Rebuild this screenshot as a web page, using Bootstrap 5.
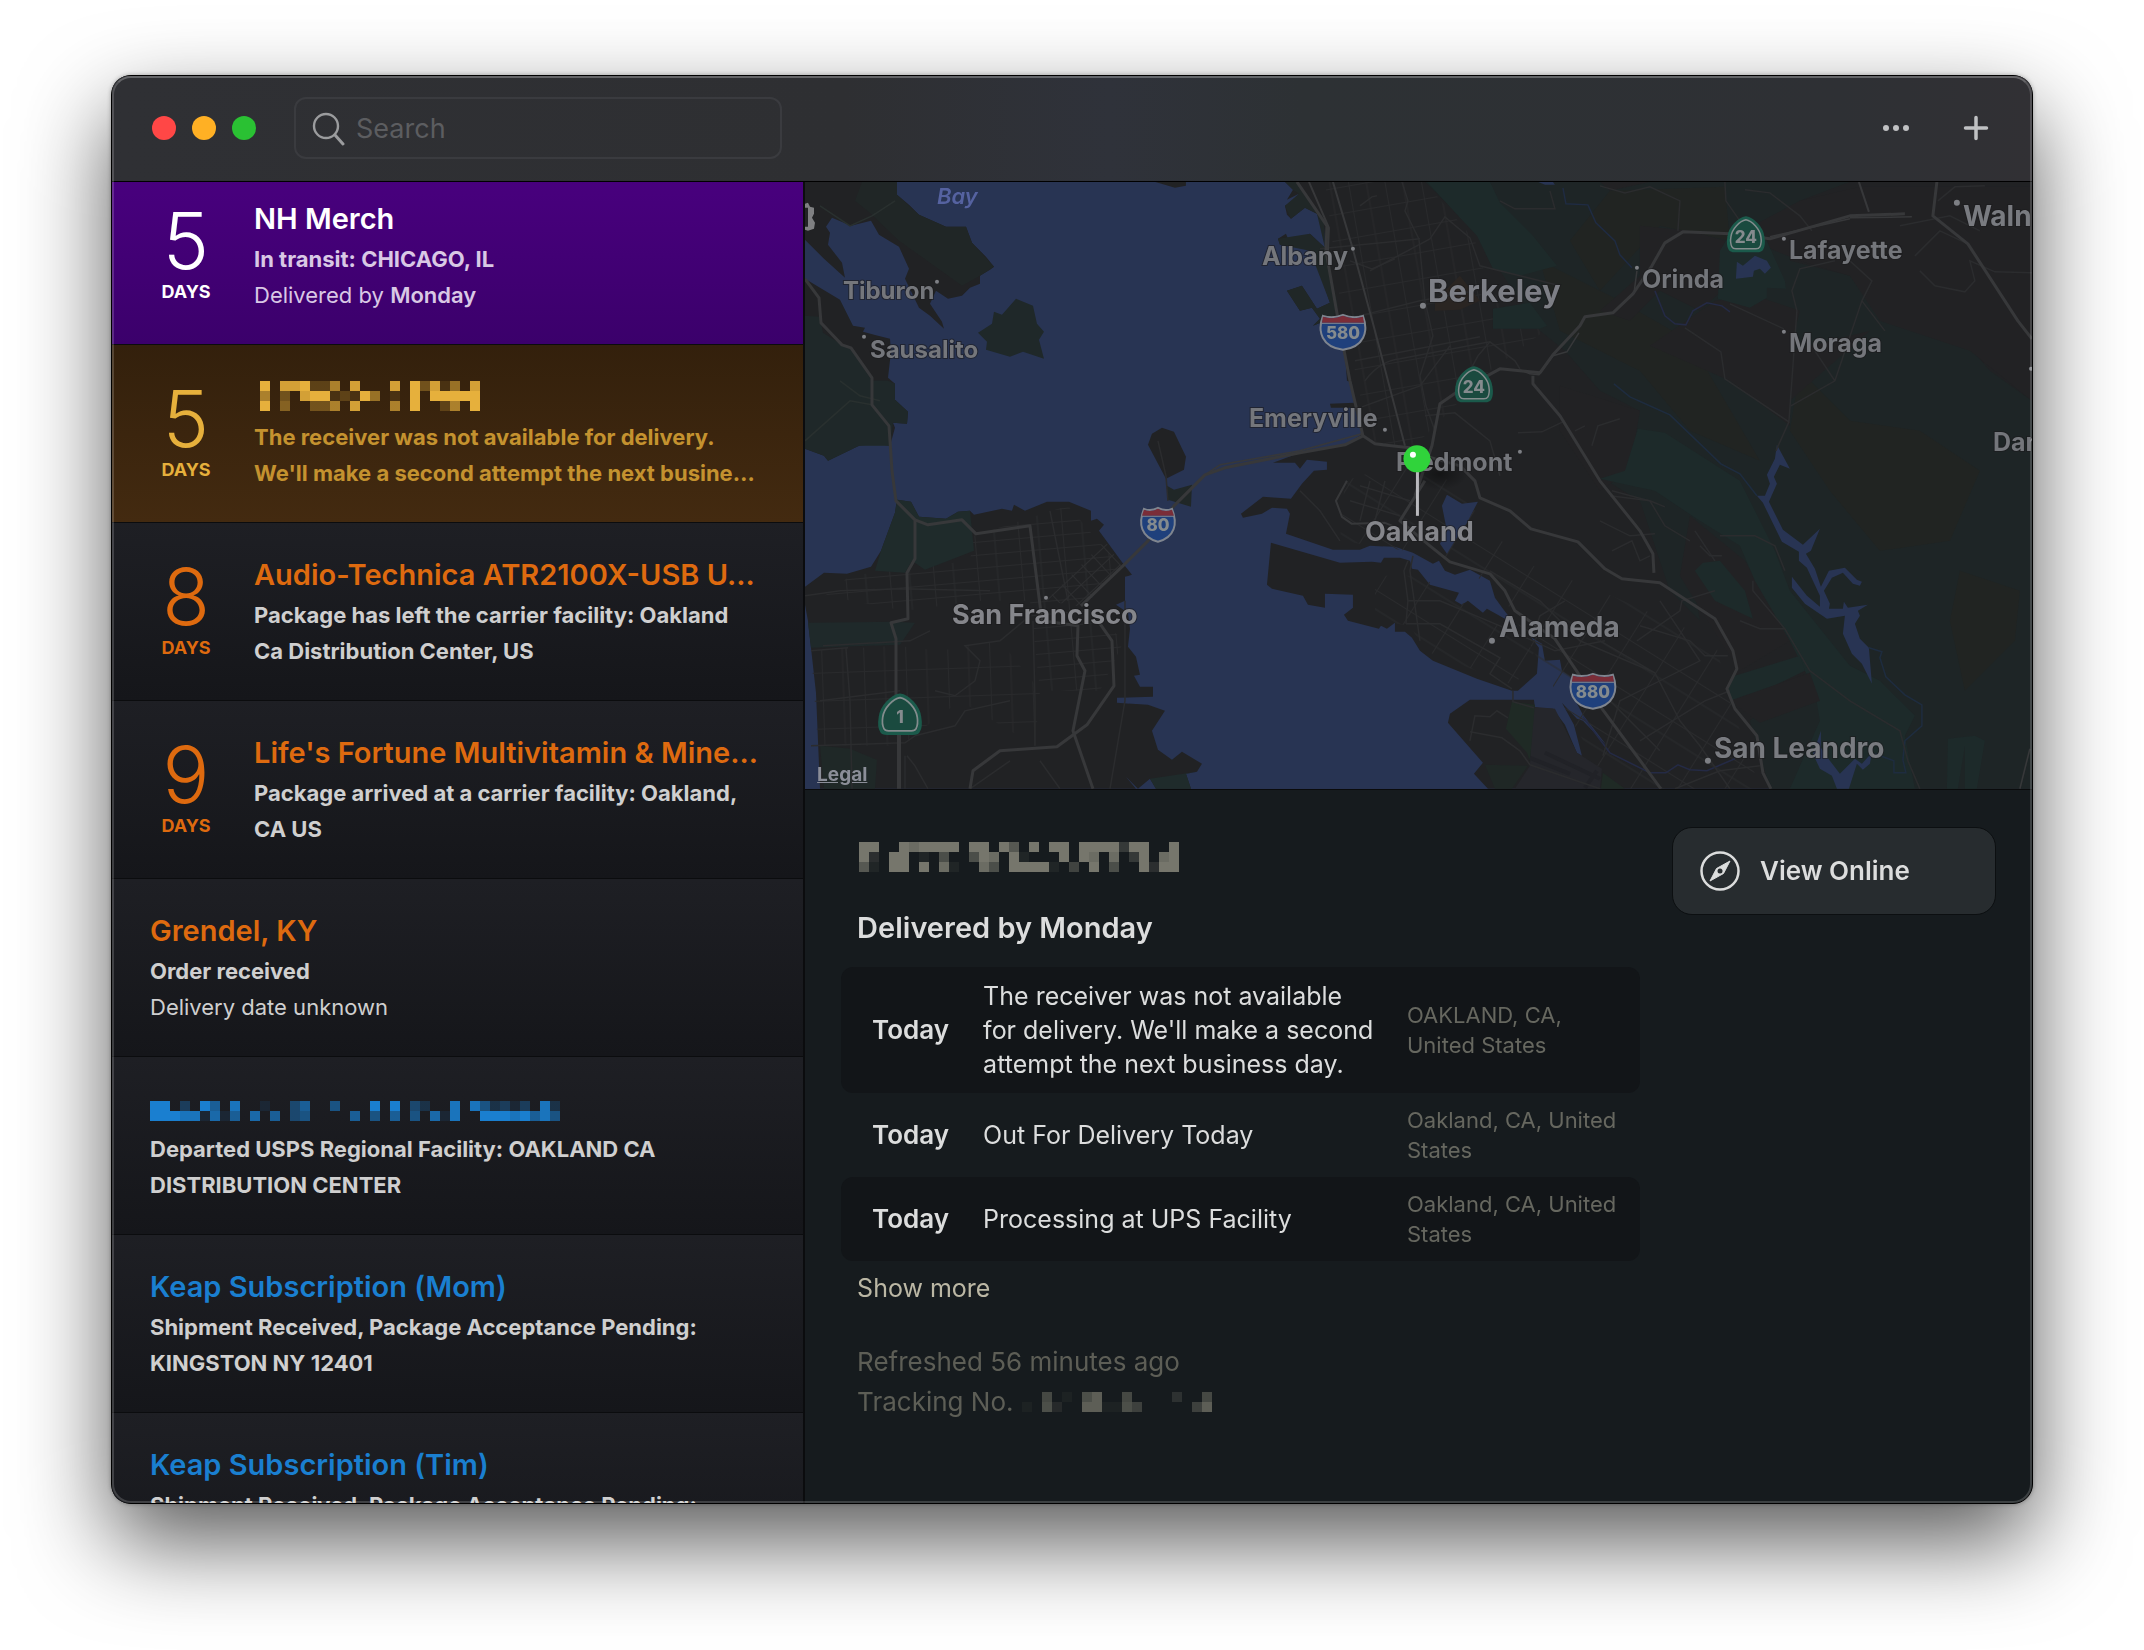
<!DOCTYPE html>
<html lang="en" data-bs-theme="dark">
<head>
<meta charset="utf-8">
<meta name="viewport" content="width=device-width, initial-scale=1">
<title>Deliveries</title>
<link href="https://cdn.jsdelivr.net/npm/bootstrap@5.3.0/dist/css/bootstrap.min.css" rel="stylesheet">
<style>
  body { background: #fff; font-family: Inter, "Liberation Sans", sans-serif; font-size: 26px; color: #dcdddd; }
  .desktop { padding: 75px 111px 146px; height: 100vh; min-height: 900px; }
  .app-window { position: relative; border: 1px solid #000; border-radius: 20px; background: #161b1e;
    box-shadow: 0 38px 90px rgba(0,0,0,.65), 0 0 4px rgba(0,0,0,.3); }
  .app-window::after { content: ""; position: absolute; inset: 0; border-radius: 19px; pointer-events: none;
    border: 2px solid rgba(255,255,255,.17); border-top-color: rgba(255,255,255,.26); }

  .titlebar { height: 106px; padding: 0 32px 2px 40px; border-bottom: 1px solid #000;
    background: linear-gradient(90deg, #2f3034 0%, #2e2f32 38%, #2f323a 52%, #2d3134 62%, #2e3034 90%, #313034 100%); }
  .light { width: 24px; height: 24px; border-radius: 50%; border: 0; padding: 0; }
  .light-close { background: #ff4746; }
  .light-min { background: #ffb024; }
  .light-max { background: #2ac133; }
  .search-box { width: 488px; height: 62px; margin-left: 38px; border: 2px solid #3a3b3f; border-radius: 12px; padding: 0 16px; }
  .search-box input { min-width: 0; background: none; border: 0; outline: 0; padding: 4px 0 0; font-size: 27px; color: #dcdddd; }
  .search-box input::placeholder { color: #5c5d60; opacity: 1; }
  .tool-btn { width: 48px; height: 48px; padding: 0; border: 0; background: none; color: #c0c1c3; }

  .sidebar { flex: 0 0 36.1%; border-right: 2px solid #0b0c0e; background: #18191c; overflow-y: auto; scrollbar-width: none; }
  .sidebar::-webkit-scrollbar { display: none; }
  .parcel { min-height: 178px; padding: 30px 36px 0 38px; border-top: 1px solid #0b0c0e; gap: 32px; flex-shrink: 0;
    background: linear-gradient(#1e1f24, #15161a); color: #cfcfcf; font-size: 22px; line-height: 36px; font-weight: 700; text-decoration: none; }
  .parcel-name { font-size: 29px; line-height: 44px; font-weight: 600; margin: 0; }
  .parcel-text { display: -webkit-box; -webkit-line-clamp: 2; -webkit-box-orient: vertical; overflow: hidden; margin: 0 4px 0 0; }
  .count { width: 72px; padding-top: 5px; text-align: center; flex-shrink: 0; }
  .count-num { font-size: 78px; line-height: 78px; font-weight: 300; display: block; }
  .count-unit { font-size: 18px; line-height: 24px; font-weight: 700; display: block; }
  .is-orange .parcel-name, .is-orange .count { color: #de6a0f; }
  .is-blue .parcel-name { color: #1a7fd0; }
  .is-purple { background: linear-gradient(#49007f, #3b006b); color: #d9c8e5; }
  .is-purple .parcel-name, .is-purple .count { color: #fff; }
  .is-amber { background: linear-gradient(#33200c, #432a10); color: #c4922f; }
  .is-amber .parcel-name, .is-amber .count { color: #e6b03c; }
  .mosaic { display: block; }
  .name-mosaic { height: 44px; padding: 6px 0 8px 6px; }
  .is-blue .name-mosaic { padding: 4px 0 10px 0; }

  .map-pane { height: 46%; border-bottom: 1px solid #0a0b0c; background: #283453; }
  .map-art { width: 100%; height: 100%; display: block; }
  .map-art text { font-family: Inter, "Liberation Sans", sans-serif; font-weight: 700; font-size: 24px; fill: #74767b;
    paint-order: stroke; stroke: #1a1b1d; stroke-width: 2px; stroke-opacity: .6; }
  .map-art .suburb { font-size: 25px; }
  .map-art .city { font-size: 27px; fill: #85868b; }
  .map-art .town { font-size: 28px; fill: #797b80; }
  .map-art .major { font-size: 31px; fill: #7d7f86; }
  .map-art .bay { font-size: 22px; font-weight: 600; fill: #5562a0; stroke: none; }
  .map-art .sign { font-size: 17px; font-weight: 800; fill: #858b8e; text-anchor: middle; stroke: none; }
  .legal { position: absolute; left: 12px; bottom: 2px; font-size: 19px; line-height: 24px; font-weight: 700; color: #8b8e98; }

  .detail { padding: 37px 36px 0; gap: 32px; }
  .detail-head { padding: 15px 16px 0 18px; }
  .detail-head h2 { font-size: 29px; line-height: 44px; font-weight: 600; margin: 34px 0 17px -2px; color: #dcdddd; }
  .events { table-layout: fixed; width: 100%; line-height: 34px; border-collapse: separate; border-spacing: 0; }
  .events th, .events td { padding: 12px 0; vertical-align: middle; }
  .events th { width: 142px; padding-left: 31px; font-weight: 600; }
  .events .place { width: 233px; padding-right: 8px; font-size: 22px; line-height: 30px; color: #66675f; }
  .events .what { padding-right: 20px; font-size: 25px; }
  .events tr:nth-child(odd) > * { background: #121518; }
  .events tr > :first-child { border-radius: 12px 0 0 12px; }
  .events tr > :last-child { border-radius: 0 12px 12px 0; }
  .more-btn { border: 0; background: none; padding: 0; color: #bbb7a4; font-size: 25px; line-height: 36px; margin: 9px 16px 36px; }
  .meta { padding: 0 16px; color: #5d5e56; line-height: 40px; }
  .online-btn { width: 324px; height: 88px; padding: 0 27px; gap: 20px; border: 1px solid #0c0f11; border-radius: 20px;
    background: #272c2f; color: #dcdddd; font-size: 26px; font-weight: 600; }
</style>
<script src="https://cdn.jsdelivr.net/npm/bootstrap@5.3.0/dist/js/bootstrap.bundle.min.js"></script>
</head>
<body>
<div class="desktop">
<div class="app-window d-flex flex-column h-100">

  <header class="titlebar d-flex align-items-center flex-shrink-0 rounded-top-4">
    <div class="d-flex gap-3">
      <button class="light light-close" aria-label="Close"></button>
      <button class="light light-min" aria-label="Minimize"></button>
      <button class="light light-max" aria-label="Zoom"></button>
    </div>
    <label class="search-box d-flex align-items-center gap-2">
      <svg class="flex-shrink-0" width="36" height="36" viewBox="0 0 36 36" fill="none" stroke="#9b9c9e" stroke-linecap="round"><circle cx="14" cy="16" r="12" stroke-width="2.400"/><path d="M23 25l8 9" stroke-width="3"/></svg>
      <input type="search" class="flex-fill" placeholder="Search" aria-label="Search">
    </label>
    <div class="ms-auto d-flex gap-4">
      <button class="tool-btn me-2" aria-label="More">
        <svg width="48" height="48" viewBox="0 0 48 48" fill="currentColor"><circle cx="14" cy="24" r="3"/><circle cx="24" cy="24" r="3"/><circle cx="34" cy="24" r="3"/></svg>
      </button>
      <button class="tool-btn" aria-label="Add">
        <svg width="48" height="48" viewBox="0 0 48 48" fill="none" stroke="currentColor" stroke-width="3.500" stroke-linecap="round"><path d="M24 13.500v21M13.500 24h21"/></svg>
      </button>
    </div>
  </header>

  <div class="d-flex flex-fill overflow-hidden rounded-bottom-4">
    <nav class="sidebar d-flex flex-column" id="parcels" aria-label="Deliveries">
      <a href="#" class="parcel is-purple d-flex">
        <div class="count"><span class="count-num">5</span><span class="count-unit">DAYS</span></div>
        <div class="flex-fill overflow-hidden">
          <h3 class="parcel-name text-truncate">NH Merch</h3>
          <p class="parcel-text">In transit: CHICAGO, IL</p>
          <p class="parcel-text fw-normal">Delivered by <b class="fw-semibold">Monday</b></p>
        </div>
      </a>
      <a href="#" class="parcel is-amber d-flex">
        <div class="count"><span class="count-num">5</span><span class="count-unit">DAYS</span></div>
        <div class="flex-fill overflow-hidden">
          <h3 class="parcel-name name-mosaic"><svg class="mosaic" data-rows="9088922608000809381508 6030899121950109099999 9040033608000609002609"></svg></h3>
          <p class="parcel-text">The receiver was not available for delivery. We'll make a second attempt the next busine…</p>
        </div>
      </a>
      <a href="#" class="parcel is-orange d-flex">
        <div class="count"><span class="count-num">8</span><span class="count-unit">DAYS</span></div>
        <div class="flex-fill overflow-hidden">
          <h3 class="parcel-name text-nowrap">Audio-Technica ATR2100X-USB U…</h3>
          <p class="parcel-text">Package has left the carrier facility: Oakland Ca&nbsp;Distribution Center, US</p>
        </div>
      </a>
      <a href="#" class="parcel is-orange d-flex">
        <div class="count"><span class="count-num">9</span><span class="count-unit">DAYS</span></div>
        <div class="flex-fill overflow-hidden">
          <h3 class="parcel-name text-nowrap">Life's Fortune Multivitamin &amp; Mine…</h3>
          <p class="parcel-text">Package arrived at a carrier facility: Oakland, CA US</p>
        </div>
      </a>
      <a href="#" class="parcel is-orange d-flex">
        <div class="flex-fill overflow-hidden">
          <h3 class="parcel-name text-truncate">Grendel, KY</h3>
          <p class="parcel-text">Order received</p>
          <p class="parcel-text fw-normal">Delivery date unknown</p>
        </div>
      </a>
      <a href="#" class="parcel is-blue d-flex">
        <div class="flex-fill overflow-hidden">
          <h3 class="parcel-name name-mosaic"><svg class="mosaic" data-rows="00000000000000000000000000000000000000000 99030960800100460050009090420080852313082 99988171607060450000605060507180099989685"></svg></h3>
          <p class="parcel-text">Departed USPS Regional Facility: OAKLAND CA DISTRIBUTION CENTER</p>
        </div>
      </a>
      <a href="#" class="parcel is-blue d-flex">
        <div class="flex-fill overflow-hidden">
          <h3 class="parcel-name text-truncate">Keap Subscription (Mom)</h3>
          <p class="parcel-text">Shipment Received, Package Acceptance Pending: KINGSTON NY 12401</p>
        </div>
      </a>
      <a href="#" class="parcel is-blue d-flex">
        <div class="flex-fill overflow-hidden">
          <h3 class="parcel-name text-truncate">Keap Subscription (Tim)</h3>
          <p class="parcel-text">Shipment Received, Package Acceptance Pending:</p>
        </div>
      </a>
    </nav>

    <main class="flex-fill d-flex flex-column overflow-hidden">
      <section class="map-pane position-relative flex-shrink-0" aria-label="Map">
        <svg class="map-art" viewBox="805 181 1227 607" preserveAspectRatio="xMidYMid slice">
          <defs>
            <pattern id="grid-sf" width="44" height="26" patternUnits="userSpaceOnUse" patternTransform="rotate(-5)"><path d="M0 .5H44M0 13.500H44M.5 0V26M20 0V26" fill="none" stroke="#2a2b2d" stroke-width="1"/></pattern>
            <pattern id="grid-soma" width="14" height="12" patternUnits="userSpaceOnUse" patternTransform="rotate(-43)"><path d="M0 .5H14M.5 0V12" fill="none" stroke="#2d2e30" stroke-width="1"/></pattern>
            <pattern id="grid-sunset" width="42" height="28" patternUnits="userSpaceOnUse" patternTransform="rotate(-2)"><path d="M0 .5H42M.5 0V28M21 0V28" fill="none" stroke="#292a2c" stroke-width="1"/></pattern>
            <pattern id="grid-berk" width="36" height="26" patternUnits="userSpaceOnUse" patternTransform="rotate(-10)"><path d="M0 .5H36M.5 0V26M18 0V26" fill="none" stroke="#292a2c" stroke-width="1"/></pattern>
            <pattern id="grid-oak" width="40" height="46" patternUnits="userSpaceOnUse" patternTransform="rotate(32)"><path d="M0 .5H40M0 17H40M.5 0V46" fill="none" stroke="#2a2b2d" stroke-width="1"/></pattern>
            <radialGradient id="pinshade"><stop offset="0" stop-color="#000" stop-opacity=".4"/><stop offset="1" stop-color="#000" stop-opacity="0"/></radialGradient>
            <g id="ca"><path d="M0-17C7-16 16-7 17 2C18 8 18 11 16 14Q15 16 11 16H-11Q-15 16-16 14C-18 11-18 8-17 2C-16-7-7-16 0-17Z" fill="#1a4a3f" stroke="#1b5a4b" stroke-width="3"/><path d="M0-15C6-14 14-6 15 2C16 8 15 10 14 12Q13 14 10 14H-10Q-13 14-14 12C-15 10-16 8-15 2C-14-6-6-14 0-15Z" fill="#1a4a3f" stroke="#838c8d" stroke-width="1.500"/></g>
            <g id="i3"><path d="M-20-16Q-10-13 0-17Q10-13 20-16C26 0 21 15 0 18C-21 15-26 0-20-16Z" fill="#1f407c" stroke="#7f858f" stroke-width="2"/><path d="M-20-15Q-10-12 0-16Q10-12 20-15L21-9H-21Z" fill="#7a2d38"/><path d="M-21-8.500H21" stroke="#7f858f"/></g>
            <g id="i2"><path d="M-14-15Q-7-12 0-16Q7-12 14-15C20 0 17 13 0 18C-17 13-20 0-14-15Z" fill="#1f407c" stroke="#7f858f" stroke-width="2"/><path d="M-14-14Q-7-11 0-15Q7-11 14-14L16-8H-16Z" fill="#7a2d38"/><path d="M-16-7.500H16" stroke="#7f858f"/></g>
          </defs>
          <rect x="805" y="181" width="1227" height="607" fill="#283453"/>

          <!-- Marin -->
          <g fill="#212224">
            <path d="M805 181H897V194L909 204 919 214 946 226H966L972 242 986 256 994 266 990 269 980 275V283L970 287 962 295 948 298 936 290 930 303 942 321 944 328 930 315 919 307 905 278 909 268 899 246 879 234 871 220 851 225 832 217 826 226 830 232 828 244 842 262 845 277 824 258 805 239Z"/>
            <path d="M805 278L840 299 853 325 865 327 863 331 890 338 891 351 888 377 895 383V399L908 411 907 423 893 422 895 427 890 445 875 443 859 445 828 460 824 455 805 448Z"/>
            <path d="M1148 444L1152 433 1162 427 1174 431 1186 456 1184 469 1166 478Z"/>
            <path d="M1155 181H1186V185L1175 187Z"/>
          </g>
          <g fill="#1f2829">
            <path d="M862 181H897V194L919 214 946 226H966L972 242 994 266 980 275 962 285 930 262 899 240 871 213 855 200Z" fill="#202626"/>
            <path d="M805 315L820 316 823 332 842 344 851 348 872 380 888 380 895 383V399L908 411 907 423 893 422 890 445 859 445 828 460 824 455 805 448Z"/>
            <path d="M978 332L992 323 994 311 1002 314 1016 298 1033 305 1037 323 1044 331 1039 339 1044 358 1023 351 1010 356 986 349 987 341Z"/>
            <path d="M1166 478L1167 485 1174 489 1192 484 1191 506 1168 499Z" fill="#202727"/>
          </g>

          <!-- San Francisco -->
          <path id="sf" fill="#212224" d="M805 586L824 572 847 573 871 566 881 550 895 512 897 499 911 501 919 516 946 518 958 511 970 510 974 514 1002 508 1012 510 1014 504 1025 510 1047 501H1069L1091 510V520L1097 518 1104 524 1099 530 1124 564 1132 574 1125 576V600L1116 604 1128 612 1130 628 1128 646 1136 656 1140 674 1134 675 1140 686H1153V696L1117 697V702L1148 704 1165 710 1152 730 1158 749 1172 759 1182 751 1202 763 1197 771 1186 773 1191 788H1156L1150 778 1138 788 1126 776 1136 788H820L816 692 808 620 805 604Z"/>
          <path d="M974 535L1068 505 1120 566 1085 605 1124 640 1100 690H1040L1030 600 980 600 905 610 825 595 850 575 970 560Z" fill="url(#grid-sf)"/>
          <path d="M1046 600L1105 540 1122 566 1082 606Z" fill="url(#grid-soma)"/>
          <path d="M811 650L895 645 940 650 1000 640 1040 690 1035 745 960 700 900 745H818Z" fill="url(#grid-sunset)"/>
          <g fill="#1f2b2b">
            <path d="M895 512L897 499 911 501 919 516 946 518 958 511 970 510 974 550 925 569 912 560 905 572 875 570 881 550Z"/>
            <path d="M808 622L895 621 915 622 900 644 811 647Z" fill="#1f292a"/>
            <path d="M820 745L850 748 877 759 875 788H824Z" fill="#1f2827"/>
            <path d="M1150 778L1197 771 1186 773 1191 788H1156Z"/>
          </g>

          <!-- East Bay -->
          <path fill="#212224" d="M1285 181L1293 189 1287 199 1299 193 1295 200 1285 205 1287 214 1291 218 1305 207 1317 213 1324 225 1325 247 1310 233 1300 240H1289L1286 233 1278 238 1280 244 1300 243 1310 250 1320 272 1330 302 1317 308 1302 285 1287 290 1300 310 1312 307 1320 318 1313 325 1333 317 1345 352 1347 380 1352 382 1354 402 1330 403 1331 407 1355 407 1363 433 1347 443 1300 452 1273 462H1295L1300 468 1307 459 1327 461V469L1314 470 1302 483 1291 498 1263 496 1241 513 1243 517 1262 513 1272 507 1287 508 1290 513 1286 533 1333 549H1360L1370 545 1395 546 1413 552 1433 563 1439 560 1445 570 1455 574 1470 569 1490 580 1495 597 1503 608 1520 630 1542 643 1545 660 1560 659 1562 670 1572 677 1574 697 1583 714 1607 745 1583 720 1577 718 1562 702 1574 724 1582 755 1577 752 1565 724 1553 708 1535 707 1534 699H1470L1450 713 1448 722 1483 762 1474 773 1488 788H2032V181Z"/>
          <path fill="#212224" d="M1271 542L1267 584 1272 588 1303 595 1308 604 1325 607V593L1353 594V607L1344 614 1348 620 1379 628 1381 625 1387 628 1395 622V631H1405L1412 637 1420 650 1433 660 1477 678 1512 690H1518L1537 673 1539 647 1530 635 1505 618 1487 608 1483 612 1468 600 1462 604 1455 600 1459 592 1430 584 1418 569 1412 568 1410 560 1400 557H1384L1381 562 1372 561 1340 562Z"/>
          <g fill="#202727"><path d="M1285 181H1297L1324 222 1325 247 1338 305 1333 317 1313 325 1320 318 1312 307 1300 310 1287 290 1302 285 1317 308 1330 302 1310 250 1280 244 1278 238 1310 233 1325 247 1317 213 1305 207 1291 218 1285 205 1299 193 1293 189Z"/></g>
          <path d="M1325 181L1425 181 1475 240 1490 290 1545 330 1490 370 1410 450 1370 440 1340 300Z" fill="url(#grid-berk)"/>
          <path d="M1345 480L1425 455 1520 560 1600 590 1715 640 1730 700 1760 788 1610 788 1500 590 1440 555 1340 540Z" fill="url(#grid-oak)"/>
          <path d="M1375 575L1420 575 1500 625 1535 650 1515 685 1425 650 1410 625 1375 620Z" fill="url(#grid-oak)"/>

          <!-- Hills -->
          <path fill="#1e2526" d="M1425 181H1850L1800 200 1790 260 1850 275 1930 300 1990 370 2032 400V788H1770L1750 720 1820 660 1790 610 1760 620 1745 590 1690 560 1700 620 1670 590 1640 500 1590 470 1615 440 1640 410 1600 390 1565 350 1540 330 1500 270 1475 230Z"/>
          <g fill="#212422">
            <path d="M1540 260L1620 300 1690 340 1760 460 1690 430 1640 370 1560 330Z"/>
            <path d="M1610 190L1725 186 1730 240 1660 225 1600 290 1570 240Z"/>
            <path d="M1800 370L1850 420 1920 430 1980 470 1950 540 1880 550 1830 490 1790 430Z"/>
            <path d="M1960 570L2020 590 2015 640 1965 690 1950 620Z"/>
          </g>
          <g fill="#222224">
            <path d="M1640 225L1690 230 1725 240 1722 290 1700 310 1660 290 1630 320 1600 310 1640 275Z"/>
            <path d="M1740 232L1800 200 1860 186H2032V400L1970 350 1880 320 1850 275 1800 260 1775 250Z"/>
            <path d="M1755 295L1800 310 1790 350 1870 330 1790 400 1790 425 1730 380 1650 345 1715 300Z"/>
            <path d="M1560 385L1640 410 1630 470 1600 490 1560 430Z"/>
            <path d="M1690 515L1745 560 1780 620 1790 640 1740 670 1720 640 1680 575Z"/>
            <path d="M1650 181L1610 190 1600 181Z"/>
          </g>
          <g fill="#1d2a2a">
            <path d="M1427 181H1490L1500 202 1533 235 1557 265 1520 275 1493 268 1477 235 1460 217Z"/>
            <path d="M1493 308L1530 302 1547 325 1540 328H1493Z"/>
            <path d="M1720 250L1735 225H1760L1785 280 1786 288 1767 287V297L1750 307 1718 298Z"/>
            <path d="M1638 428L1665 432 1740 480 1775 550 1790 590 1850 665 1880 680 1915 715 1905 735 1915 788H1790L1820 720 1815 690 1790 640 1755 580 1740 545 1700 520 1655 490 1600 478 1625 470Z"/>
            <path d="M1695 570L1703 562 1720 560 1745 590 1753 618 1715 600Z"/>
            <path d="M1727 690L1735 675 1800 655 1805 670 1733 705Z"/>
            <path d="M1948 738L1975 735 1985 740 1977 788H1965V745L1958 788H1947Z"/>
          </g>
          <path fill="#222224" d="M1730 700L1810 672 1820 700 1760 722Z"/>
          <path d="M1435 300L1460 275 1480 300 1460 309 1435 310Z" fill="#2a2522"/>
          <path d="M1533 706L1555 708 1577 752 1602 768 1600 788H1515L1530 765Z" fill="#25262b"/>
          <path d="M1512 701L1535 704 1530 760 1527 752 1506 728Z" fill="#1f2a25"/>
          <path d="M1485 764L1528 765 1512 788H1495Z" fill="#1f2725"/>
          <path d="M1545 752L1600 778M1530 757L1570 773M1585 787L1597 770" stroke="#212227" stroke-width="4"/>
          <path d="M1603 772L1625 788H1601Z" fill="#1f2a25"/>

          <!-- Lakes and creeks -->
          <g fill="#283453">
            <path d="M1447 494L1462 503 1478 501 1467 522 1455 540 1447 553 1440 543 1447 530 1442 505Z"/>
            <path d="M1777 444L1790 468 1780 464 1774 476 1777 483 1769 501 1783 529 1803 544 1820 528 1811 550 1806 553 1815 568 1821 586 1829 570 1845 567 1857 579 1862 581 1860 585 1853 583 1843 572 1832 577 1824 590 1830 603 1829 608H1843L1844 601 1848 607 1868 604 1858 610 1860 615 1855 623 1860 638 1869 647 1872 683 1862 663 1852 653 1843 633 1845 615 1827 618 1805 603 1792 587V576L1807 595 1820 606V595L1807 567 1799 560V551L1782 541 1763 502 1757 495 1765 495 1770 483 1767 474 1775 458Z"/>
            <path d="M1821 730V747L1830 760 1840 773 1855 758 1862 763 1872 752 1870 763 1863 769 1857 763 1849 788H1837L1832 775 1820 768 1813 753 1817 742Z"/>
            <path d="M1737 261L1743 265 1755 255 1767 260 1771 267 1765 273 1760 268 1754 270 1753 276 1736 278Z"/>
            <path d="M1538 181H1553L1555 184H1545Z"/>
          </g>
          <g fill="none" stroke="#253052" stroke-width="1.500">
            <path d="M1563 187L1566 203 1588 204 1596 222 1615 240 1620 254 1632 267" stroke="#1f2b42"/>
            <path d="M1655 290L1665 315 1675 323 1686 324 1693 310 1707 302 1722 305 1730 311" stroke="#242a45"/>
            <path d="M1614 383L1630 396 1670 414 1721 463 1740 473 1757 495" stroke="#1e2c3f"/>
            <path d="M1869 647L1882 651 1880 657 1886 676 1905 694 1922 704V725L1905 740 1903 759 1906 772H1894V760L1875 753" stroke="#1e2c3f"/>
            <path d="M1583 716L1610 752 1650 772H1666L1678 764 1690 769 1707 770 1735 758" stroke="#242a45"/>
          </g>

          <!-- Streets -->
          <g fill="none" stroke="#2b2c2e" stroke-width="1.500">
            <path d="M1340 320L1420 300 1475 290M1355 360L1480 336M1365 380Q1380 360 1400 358L1490 341M1362 406L1420 385 1450 345M1370 270L1430 238 1445 216 1470 237 1480 265 1560 285"/>
            <path d="M1402 181L1408 200 1405 210 1419 238 1425 300 1433 335 1420 375 1426 405 1435 430M1320 248L1420 238M1360 205L1372 196 1377 195M1350 260L1372 268 1395 258"/>
            <path d="M1425 415L1455 412 1490 440 1500 475M1470 370L1478 355 1490 341 1515 360 1520 368"/>
            <path d="M1518 432L1542 431 1565 420M1592 445L1598 425 1620 418M1585 425L1575 430"/>
            <path d="M1407 600L1440 600 1500 625 1555 650 1605 640M1406 623H1440L1500 657 1490 673 1512 688"/>
            <path d="M1408 560L1404 570 1408 600 1406 623M1413 555L1410 570 1420 640"/>
            <path d="M1513 690V701L1534 707M1470 740L1475 715 1490 716 1497 710 1508 717M1470 731L1502 737 1520 750 1530 764 1600 788"/>
            <path d="M1490 570L1540 600 1580 640 1655 672 1680 720 1700 745 1730 788M1600 640L1655 672M1565 600L1540 615 1535 630"/>
            <path d="M1603 755L1620 700 1700 660 1660 600M1640 740L1705 700 1730 690M1675 788L1720 770 1760 765"/>
            <path d="M1637 640L1680 610 1682 600 1715 590M1640 625L1690 640 1705 655H1728M1610 700L1660 750"/>
            <path d="M1612 550L1632 540 1640 560 1650 555M1600 520L1630 535 1655 533M1610 495L1650 500 1665 506"/>
            <path d="M1730 303L1784 328M1685 327L1721 351 1725 378 1789 421 1797 310 1792 290 1800 268 1835 260M1789 421L1776 450"/>
            <path d="M1791 405L1835 380 1862 300 1872 280 1850 260M1835 380L1815 350M1862 300L1885 330"/>
            <path d="M1900 225L1950 215 1980 230M1915 255L1940 230 1968 243M1938 200L1955 186 1985 185"/>
            <path d="M1920 270L1935 285 1965 291 1975 280 1970 260 1995 271 2032 272"/>
            <path d="M1500 200L1515 208H1555L1550 190M1600 185L1625 192 1650 186 1680 200 1678 230"/>
            <path d="M1725 181L1726 200 1740 220M1745 189L1770 192 1800 215 1812 230"/>
            <path d="M1612 490L1650 500 1665 525 1690 540M1720 535L1755 535 1775 545 1785 570M1695 530L1715 560M1740 620L1760 628 1785 628"/>
            <path d="M1700 545L1710 555 1722 555M1753 580V590L1785 628 1810 670 1850 700 1900 730 1908 760 1920 788"/>
            <path d="M2030 748L2020 788" stroke="#37383a"/>
            <path d="M1300 490L1320 510 1340 540M1360 485L1410 500M1350 500L1400 515M1370 480L1360 520M1385 480L1375 520"/>
            <path d="M805 595L840 590 900 588 990 590M823 645L910 640 930 630M846 648L850 700 852 788M811 650L848 647"/>
            <path d="M928 788L915 765 907 755M915 735L955 725 965 710 1010 700M935 690L955 695 975 680 980 660 965 645 1000 640 1030 615"/>
            <path d="M1125 600V700L1110 788M1050 510L1068 600M1035 745V700L1033 620M1010 760L970 788M1060 788L1040 760"/>
            <path d="M811 745L905 742 915 735M820 700L900 690M905 755V788"/>
            <path d="M820 205L850 225 872 215 895 200M840 380L860 395 880 400M805 440L850 400 872 404" stroke="#29302f"/>
            <path d="M1158 440L1166 475 1168 500"/>
          </g>
          <!-- Highways -->
          <g fill="none" stroke="#37383a" stroke-width="3" stroke-linejoin="round">
            <path d="M805 278L819 297 821 322 842 344 851 347 872 377V404L889 425 892 470 896 500 915 519V558L907 572 908 618 891 622 896 638V700"/>
            <path d="M899 720V788" stroke-width="4"/>
            <path d="M915 519L928 524 962 519 976 533 1030 525 1042 620 1078 625 1077 655 1085 670 1073 730 1093 788"/>
            <path d="M970 788L973 770 1000 750 1057 746 1087 724 1114 685 1112 640 1098 620"/>
            <path d="M1081 605L1124 564 1148 540 1174 505 1205 474 1225 467 1300 452 1345 444 1363 435"/>
            <path d="M1205 474L1220 464 1300 450 1362 433" stroke-width="1.500"/>
            <path d="M1297 181L1327 225 1326 250 1338 318 1350 380 1363 435 1375 443 1410 447 1425 455"/>
            <path d="M1309 181L1329 227 1328 250" stroke-width="2"/>
            <path d="M1333 181L1352 245 1375 330 1405 445" stroke-width="2"/>
            <path d="M1415 495L1432 445 1440 403 1456 392 1500 368 1540 372 1553 354 1580 325 1585 316 1613 312 1633 293 1652 265 1665 242 1683 231 1730 233 1770 238 1850 215 1905 213"/>
            <path d="M1520 369L1530 373 1539 374 1553 355 1567 351 1579 332M1850 217L1912 216M1770 236L1850 218M1637 270L1634 293" stroke-width="1.500"/>
            <path d="M1937 181L1933 215 1968 243 2018 320 2032 338"/>
            <path d="M1533 375V383L1560 415 1600 480 1640 530 1653 553 1654 572"/>
            <path d="M1425 455L1460 465 1475 480 1480 497 1510 510 1531 528 1578 541 1605 568 1622 578 1660 582 1715 618 1733 650 1737 668 1727 688 1735 708 1757 735 1763 772 1771 788"/>
            <path d="M1425 480L1400 520 1430 545 1450 561 1490 573 1505 590 1515 610 1555 638 1580 675 1600 705 1661 788"/>
            <path d="M1347 480L1336 500 1342 516 1352 523 1385 522 1400 528" stroke-width="2"/>
            <path d="M1859 181L1869 211" stroke-width="2"/>
          </g>

          <ellipse cx="1440" cy="473" rx="28" ry="16" fill="url(#pinshade)"/>
          <g fill="#7d7f84">
            <circle cx="937" cy="281" r="2"/><circle cx="864" cy="336" r="2"/><circle cx="1046" cy="597" r="2"/><circle cx="1353" cy="248" r="2"/><circle cx="1423" cy="305" r="3"/><circle cx="1385" cy="429" r="2"/><circle cx="1520" cy="451" r="2"/><circle cx="1492" cy="640" r="3"/><circle cx="1708" cy="760" r="3"/><circle cx="1637" cy="267" r="2"/><circle cx="1784" cy="238" r="2"/><circle cx="1784" cy="331" r="2"/><circle cx="1957" cy="202" r="3"/><circle cx="2031" cy="368" r="2"/>
          </g>
          <path d="M805 203L808 202 810 206 814 207V213L812 217 815 222 814 228 808 230 805 229V226H808V207H805Z" fill="#7f8082"/>

          <text class="bay" x="937" y="203" font-style="italic">Bay</text>
          <text x="843" y="298">Tiburon</text>
          <text x="870" y="357">Sausalito</text>
          <text class="suburb" x="1262" y="264">Albany</text>
          <text class="suburb" x="1249" y="426">Emeryville</text>
          <text class="suburb" x="1396" y="470">Piedmont</text>
          <text class="suburb" x="1642" y="287">Orinda</text>
          <text class="suburb" x="1789" y="258">Lafayette</text>
          <text class="suburb" x="1789" y="351">Moraga</text>
          <text class="suburb" x="1993" y="450">Danville</text>
          <text class="city" x="952" y="623">San Francisco</text>
          <text class="city" x="1365" y="540">Oakland</text>
          <text class="town" x="1499" y="636">Alameda</text>
          <text class="town" x="1714" y="757">San Leandro</text>
          <text class="town" x="1963" y="225">Walnut Creek</text>
          <text class="major" x="1428" y="301">Berkeley</text>

          <use href="#i3" x="1343" y="331"/><text class="sign" x="1343" y="338">580</text>
          <use href="#i2" x="1158" y="523"/><text class="sign" x="1158" y="530">80</text>
          <use href="#i3" x="1593" y="690"/><text class="sign" x="1593" y="697">880</text>
          <use href="#ca" x="1474" y="384"/><text class="sign" x="1474" y="392">24</text>
          <use href="#ca" x="1746" y="234"/><text class="sign" x="1746" y="242">24</text>
          <use href="#ca" transform="translate(900 714) scale(1.150)"/><text class="sign" x="900" y="722">1</text>

          <path d="M1417.500 468V515" stroke="#b9b9bd" stroke-width="3"/>
          <circle cx="1417" cy="458" r="13.500" fill="#30d33b"/><circle cx="1413" cy="454" r="3" fill="#fff"/>
        </svg>
        <a href="#" class="legal">Legal</a>
      </section>

      <section class="detail d-flex flex-fill align-items-start">
        <div class="flex-fill">
          <div class="detail-head">
            <svg class="mosaic" fill="#76766c" data-rows="99009899990990960909909999399009 92099010500598091000909808039089 61099090810085099991040905009299"></svg>
            <h2>Delivered by Monday</h2>
          </div>
          <table class="events">
            <tbody>
              <tr><th scope="row">Today</th><td class="what">The receiver was not available for&nbsp;delivery. We'll make a second attempt the next business day.</td><td class="place">OAKLAND, CA, United States</td></tr>
              <tr><th scope="row">Today</th><td class="what">Out For Delivery Today</td><td class="place">Oakland, CA, United States</td></tr>
              <tr><th scope="row">Today</th><td class="what">Processing at UPS Facility</td><td class="place">Oakland, CA, United States</td></tr>
            </tbody>
          </table>
          <button class="more-btn">Show more</button>
          <div class="meta">Refreshed 56 minutes ago</div>
          <div class="meta d-flex align-items-center gap-2">Tracking No. <svg class="mosaic" data-rows="0060107900600003006 1072009911750000059"></svg></div>
        </div>
        <button class="online-btn d-flex align-items-center flex-shrink-0">
          <svg width="40" height="40" viewBox="0 0 40 40"><circle cx="20" cy="20" r="18.500" fill="none" stroke="#dcdddd" stroke-width="2.500"/><path d="M30 10L23.500 22.500 10 30 16.500 17.500Z" fill="#dcdddd" stroke="#dcdddd" stroke-linejoin="round"/><circle cx="20" cy="20" r="2.500" fill="#272c2f"/></svg>
          View Online
        </button>
      </section>
    </main>
  </div>
</div>
</div>
<script>
  // Redacted names: each digit is the opacity of one 10px cell.
  document.querySelectorAll('svg[data-rows]').forEach(function (svg) {
    var rows = svg.dataset.rows.split(' ');
    svg.setAttribute('width', rows[0].length * 10);
    svg.setAttribute('height', rows.length * 10);
    if (!svg.hasAttribute('fill')) svg.setAttribute('fill', 'currentColor');
    svg.setAttribute('shape-rendering', 'crispEdges');
    rows.forEach(function (row, y) {
      row.split('').forEach(function (level, x) {
        if (level === '0') return;
        var cell = document.createElementNS('http://www.w3.org/2000/svg', 'rect');
        cell.setAttribute('x', x * 10);
        cell.setAttribute('y', y * 10);
        cell.setAttribute('width', 10);
        cell.setAttribute('height', 10);
        cell.setAttribute('opacity', level / 9);
        svg.appendChild(cell);
      });
    });
  });
  document.getElementById('parcels').scrollTop = 16;
</script>
</body>
</html>
